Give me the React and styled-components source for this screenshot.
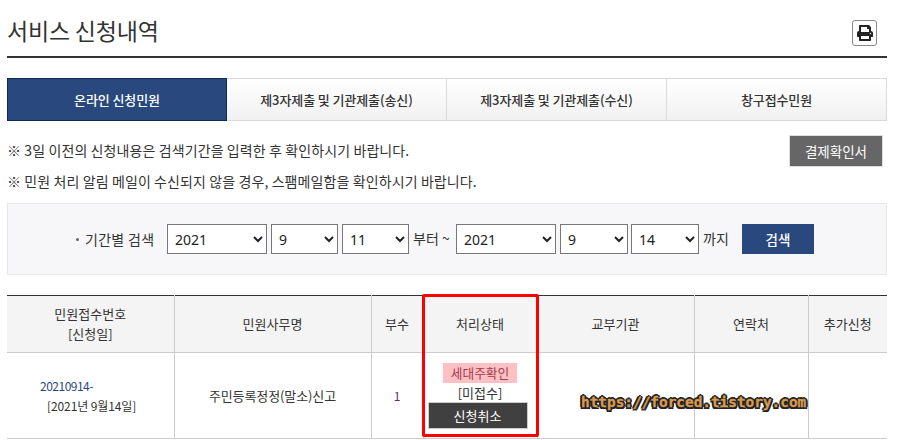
import React from 'react';
import styled, { createGlobalStyle } from 'styled-components';
import { FaPrint } from 'react-icons/fa';

const Global = createGlobalStyle`
  html, body { margin: 0; padding: 0; background: #fff; overflow: hidden; }
  body { font-family: "Noto Sans CJK KR", "Noto Sans", sans-serif; color: #333; font-size: 13px; }
`;
const Page = styled.div`
  position: relative;
  width: 880px;
  height: 440px;
  margin-left: 7px;
  overflow: hidden;
`;
const Header = styled.header`
  display: flex;
  justify-content: space-between;
  align-items: flex-start;
  height: 56px;
  box-sizing: content-box;
  border-bottom: 2px solid #333;
`;
const Title = styled.h1`
  margin: 13px 0 0 0;
  font-size: 23px;
  line-height: 34px;
  font-weight: 400;
  color: #333;
  letter-spacing: -0.2px;
`;
const PrintButton = styled.button`
  display: flex;
  align-items: center;
  justify-content: center;
  width: 25px;
  height: 26px;
  margin: 20px 10px 0 0;
  padding: 0;
  background: #fff;
  border: 1px solid #888;
  border-radius: 3px;
  color: #222;
`;
const Tabs = styled.nav`
  display: grid;
  grid-template-columns: repeat(4, 220px);
  height: 43px;
  margin-top: 20px;
`;
const Tab = styled.a`
  display: flex;
  align-items: center;
  justify-content: center;
  box-sizing: border-box;
  font-size: 13px;
  font-weight: 500;
  letter-spacing: -0.1px;
  color: ${p => (p.$active ? '#fff' : '#333')};
  background: ${p => (p.$active ? '#29487d' : 'linear-gradient(#fff, #f1f1f1)')};
  border: 1px solid ${p => (p.$active ? '#0e2a4e' : '#d9d9d9')};
  border-left-width: ${p => (p.$active ? '1px' : '0')};
`;
const Notes = styled.section`
  display: flex;
  justify-content: space-between;
  align-items: flex-start;
  height: 82px;
`;
const NoteList = styled.div`
  display: flex;
  flex-direction: column;
  gap: 12px;
  padding-top: 20px;
`;
const Note = styled.p`
  margin: 0;
  font-size: 14px;
  line-height: 19px;
  color: #333;
  letter-spacing: 0.1px;
  white-space: nowrap;
`;
const ConfirmButton = styled.button`
  width: 94px;
  height: 32px;
  margin: 14px 4px 0 0;
  padding: 0;
  font: inherit;
  font-size: 13.5px;
  color: #fff;
  background: #666;
  border: 1px solid #ddd;
`;
const SearchPanel = styled.form`
  display: flex;
  align-items: center;
  box-sizing: border-box;
  height: 72px;
  padding-left: 67px;
  background: #f7f7f9;
  border: 1px solid #e8e8e8;
`;
const SearchLabel = styled.span`
  display: flex;
  align-items: center;
  width: 92px;
  font-size: 14px;
  letter-spacing: 0.3px;
  color: #333;
  white-space: nowrap;
`;
const Bullet = styled.i`
  width: 3px;
  height: 3px;
  margin: 0 6px 0 1px;
  border-radius: 50%;
  background: #666;
`;
const Select = styled.select`
  box-sizing: border-box;
  width: ${p => p.$w}px;
  height: 30px;
  margin-right: ${p => p.$gap || 4}px;
  padding-left: 3px;
  font-family: "Noto Sans", sans-serif;
  font-size: 14px;
  color: #222;
  background: #fff;
  border: 1px solid #777;
  border-radius: 0;
`;
const Joiner = styled.span`
  width: ${p => p.$w}px;
  margin-top: -3px;
  font-size: 14px;
  white-space: nowrap;
`;
const SearchButton = styled.button`
  width: 72px;
  height: 30px;
  padding: 0;
  font: inherit;
  font-size: 13.5px;
  font-weight: 500;
  color: #fff;
  background: #29487d;
  border: 0;
`;
const Table = styled.table`
  width: 880px;
  margin-top: 20px;
  table-layout: fixed;
  border-collapse: collapse;
  border-top: 1px solid #333;
`;
const Th = styled.th`
  height: 56px;
  padding: 0;
  font-size: 13px;
  font-weight: 400;
  line-height: 20px;
  color: #333;
  background: #f4f4f4;
  border-left: 1px solid #ccc;
  border-bottom: 1px solid #ccc;
  &:first-child { border-left: 0; }
`;
const Td = styled.td`
  height: 85px;
  padding: 0;
  font-size: 13px;
  line-height: 19px;
  text-align: center;
  color: #333;
  border-left: 1px solid #ccc;
  border-bottom: 1px solid #ccc;
  &:first-child { border-left: 0; }
`;
const ServiceName = styled.span`
  font-size: 13px;
  letter-spacing: -0.1px;
`;
const ReceiptNo = styled.div`
  font-size: 12px;
  line-height: 19.5px;
  color: #333;
  text-align: left;
`;
const ReceiptId = styled.div`
  padding-left: 33px;
  letter-spacing: -0.5px;
  color: #29487d;
`;
const ReceiptDate = styled.div`
  padding-left: 40px;
  letter-spacing: -0.1px;
`;
const Count = styled.span`
  color: #5e2a6e;
  font-size: 12px;
`;
const StatusCell = styled.div`
  display: flex;
  flex-direction: column;
  align-items: center;
`;
const StatusBadge = styled.span`
  padding: 0 8px;
  height: 20px;
  font-size: 12.7px;
  line-height: 19px;
  color: #a23a4a;
  background: #ffc0c4;
`;
const StatusText = styled.span`
  line-height: 19px;
  height: 19px;
`;
const CancelButton = styled.button`
  width: 100px;
  height: 27px;
  margin-right: 5px;
  padding: 0;
  font: inherit;
  font-size: 13px;
  color: #fff;
  background: #404040;
  border: 1px solid #ccc;
`;
const Highlight = styled.div`
  position: absolute;
  left: 415px;
  top: 294px;
  width: 117px;
  height: 143px;
  box-sizing: border-box;
  border: 3px solid #f00;
  border-radius: 2px;
  pointer-events: none;
`;
const Watermark = styled.div`
  position: absolute;
  left: 574px;
  top: 392px;
  font-family: "DejaVu Sans Mono", monospace;
  font-size: 14.4px;
  font-weight: 700;
  line-height: 20px;
  white-space: nowrap;
  color: #d99b50;
  -webkit-text-stroke: 0.3px #d99b50;
  text-shadow:
    2px 0 0 #222, -2px 0 0 #222, 0 2px 0 #222, 0 -2px 0 #222,
    1.5px 1.5px 0 #222, -1.5px 1.5px 0 #222, 1.5px -1.5px 0 #222, -1.5px -1.5px 0 #222,
    0 0 2px #222;
`;

const Pick = ({ w, value, gap }) => (
  <Select $w={w} $gap={gap} defaultValue={value}>
    <option>{value}</option>
  </Select>
);

export default function App() {
  return (
    <Page>
      <Global />
      <Header>
        <Title>서비스 신청내역</Title>
        <PrintButton aria-label="인쇄"><FaPrint size={16} /></PrintButton>
      </Header>
      <Tabs>
        <Tab $active>온라인 신청민원</Tab>
        <Tab>제3자제출 및 기관제출(송신)</Tab>
        <Tab>제3자제출 및 기관제출(수신)</Tab>
        <Tab>창구접수민원</Tab>
      </Tabs>
      <Notes>
        <NoteList>
          <Note>※ 3일 이전의 신청내용은 검색기간을 입력한 후 확인하시기 바랍니다.</Note>
          <Note>※ 민원 처리 알림 메일이 수신되지 않을 경우, 스팸메일함을 확인하시기 바랍니다.</Note>
        </NoteList>
        <ConfirmButton type="button">결제확인서</ConfirmButton>
      </Notes>
      <SearchPanel>
        <SearchLabel><Bullet />기간별 검색</SearchLabel>
        <Pick w={100} value="2021" />
        <Pick w={67} value="9" />
        <Pick w={67} value="11" />
        <Joiner $w={43}>부터 ~</Joiner>
        <Pick w={100} value="2021" />
        <Pick w={68} value="9" gap={3} />
        <Pick w={68} value="14" />
        <Joiner $w={39}>까지</Joiner>
        <SearchButton type="button">검색</SearchButton>
      </SearchPanel>
      <Table>
        <colgroup>
          <col style={{ width: 167 }} />
          <col style={{ width: 197 }} />
          <col style={{ width: 52 }} />
          <col style={{ width: 114 }} />
          <col style={{ width: 157 }} />
          <col style={{ width: 114 }} />
          <col style={{ width: 79 }} />
        </colgroup>
        <thead>
          <tr>
            <Th>민원접수번호<br />[신청일]</Th>
            <Th>민원사무명</Th>
            <Th>부수</Th>
            <Th>처리상태</Th>
            <Th>교부기관</Th>
            <Th>연락처</Th>
            <Th>추가신청</Th>
          </tr>
        </thead>
        <tbody>
          <tr>
            <Td>
              <ReceiptNo>
                <ReceiptId>20210914-</ReceiptId>
                <ReceiptDate>[2021년 9월14일]</ReceiptDate>
              </ReceiptNo>
            </Td>
            <Td><ServiceName>주민등록정정(말소)신고</ServiceName></Td>
            <Td><Count>1</Count></Td>
            <Td>
              <StatusCell>
                <StatusBadge>세대주확인</StatusBadge>
                <StatusText>[미접수]</StatusText>
                <CancelButton type="button">신청취소</CancelButton>
              </StatusCell>
            </Td>
            <Td />
            <Td />
            <Td />
          </tr>
        </tbody>
      </Table>
      <Highlight />
      <Watermark>https://forced.tistory.com</Watermark>
    </Page>
  );
}
